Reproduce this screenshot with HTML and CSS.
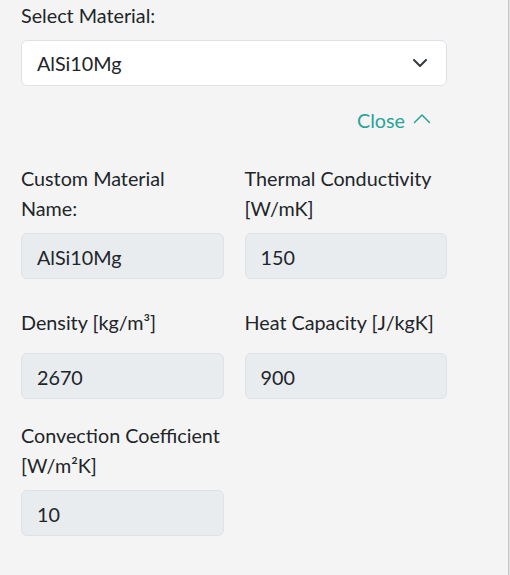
FILE: index.html
```html
<!DOCTYPE html>
<html lang="en">
<head>
<meta charset="utf-8">
<title>Material settings</title>
<link rel="stylesheet" href="styles.css">
</head>
<body>
<div class="page">
  <div class="panel">
    <label class="field-label">Select Material:</label>
    <div class="select-box">
      <span class="select-value">AlSi10Mg</span>
      <svg class="select-arrow" width="16" height="10" viewBox="0 0 16 10" aria-hidden="true">
        <path d="M2 2l6 6 6-6" fill="none" stroke="#343a40" stroke-width="2" stroke-linecap="round" stroke-linejoin="round"/>
      </svg>
    </div>
    <div class="toggle-row">
      <span class="toggle-link">Close
        <svg class="toggle-icon" width="18" height="11" viewBox="0 0 18 11" aria-hidden="true">
          <path d="M1.5 9.5L9 2l7.5 7.5" fill="none" stroke="currentColor" stroke-width="1.5" stroke-linecap="round" stroke-linejoin="round"/>
        </svg>
      </span>
    </div>
    <div class="grid">
      <div class="field">
        <label class="field-label">Custom Material Name:</label>
        <div class="input">AlSi10Mg</div>
      </div>
      <div class="field">
        <label class="field-label">Thermal Conductivity [W/mK]</label>
        <div class="input">150</div>
      </div>
      <div class="field">
        <label class="field-label tall">Density [kg/m³]</label>
        <div class="input">2670</div>
      </div>
      <div class="field">
        <label class="field-label tall">Heat Capacity [J/kgK]</label>
        <div class="input">900</div>
      </div>
      <div class="field">
        <label class="field-label">Convection Coefficient [W/m²K]</label>
        <div class="input">10</div>
      </div>
    </div>
  </div>
</div>
</body>
</html>
```
FILE: styles.css
```css
* { box-sizing: border-box; }
html, body { margin: 0; padding: 0; }
body {
  background: #f4f4f4;
  color: #212529;
  font-family: "Lato", "Open Sans", sans-serif;
  font-size: 19.75px;
  line-height: 30px;
}
.page {
  width: 509px;
  min-height: 575px;
  border-right: 1px solid #c6c6c6;
  box-shadow: 1px 0 0 #e2e2e2;
}
.panel {
  width: 447px;
  padding-left: 21px;
}
.field-label {
  display: block;
  padding-top: 1px;
  margin-bottom: 9px;
}
.select-box {
  display: flex;
  align-items: center;
  height: 46px;
  background: #fff;
  border: 1px solid #dee2e6;
  border-radius: 6px;
  padding: 2px 18px 0 15px;
}
.select-arrow { margin-left: auto; margin-top: -2px; }
.toggle-row {
  display: flex;
  justify-content: flex-end;
  align-items: center;
  padding: 3px 16px 0 0;
  margin: 18px 0 29px;
  height: 30px;
}
.toggle-link {
  color: #29a39a;
  display: inline-flex;
  align-items: center;
  gap: 8px;
}
.toggle-icon { margin-top: -5px; }
.grid {
  display: grid;
  grid-template-columns: 1fr 1fr;
  column-gap: 21px;
  row-gap: 21px;
}
.field { display: flex; flex-direction: column; }
.field-label.tall { padding-top: 8px; padding-bottom: 6px; margin-bottom: 9px; }
.input {
  height: 46px;
  display: flex;
  align-items: center;
  background: #e9ecef;
  border: 1px solid #dee2e6;
  border-radius: 6px;
  padding: 3px 15px 0;
}
```
